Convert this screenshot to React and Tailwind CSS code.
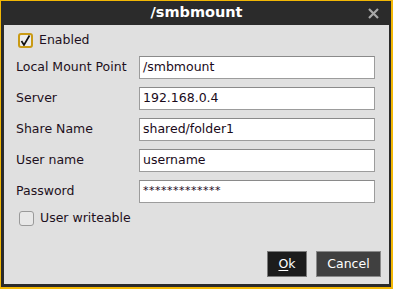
import React from "react";

const fields = [
  { label: "Local Mount Point", value: "/smbmount" },
  { label: "Server", value: "192.168.0.4" },
  { label: "Share Name", value: "shared/folder1" },
  { label: "User name", value: "username" },
  { label: "Password", value: "*************", secret: true },
];

function Check({ checked }) {
  return (
    <div
      className={`w-[15px] h-[15px] rounded-[3px] flex items-center justify-center ${
        checked ? "border-2 border-[#c99a14] bg-[#ececec]" : "border border-[#9a9a9a] bg-[#e8e8e8]"
      }`}
    >
      {checked && (
        <svg width="11" height="11" viewBox="0 0 11 11">
          <path d="M1.5 6 L4 10 L9.5 0.5" fill="none" stroke="#111" strokeWidth="1.7" />
        </svg>
      )}
    </div>
  );
}

export default function App() {
  return (
    <div
      className="w-[393px] h-[289px] bg-[#f2b705] pl-[1px] pt-[1px] pr-[2px] pb-[2px]"
      style={{ fontFamily: "'DejaVu Sans', sans-serif" }}
    >
      <div className="w-full h-full bg-[#2b2b2b] flex flex-col pl-[3px] pr-[2px] pb-[3px]">
        {/* Title bar */}
        <div className="h-[24px] flex items-center justify-center relative shrink-0">
          <span className="text-white font-bold text-[14.5px]">/smbmount</span>
          <svg
            className="absolute right-[10px] top-[7px]"
            width="11"
            height="11"
            viewBox="0 0 11 11"
          >
            <path d="M1 1 L10 10 M10 1 L1 10" stroke="#a8a8a8" strokeWidth="2.2" />
          </svg>
        </div>

        {/* Body */}
        <div className="flex-1 bg-[#e0e0e0] flex flex-col pl-[12px] pr-[14px] pt-[8px]">
          <div className="flex items-center gap-[6px] h-[15px] pl-[2px]">
            <Check checked />
            <span className="text-[12.5px] text-[#1e1020]">Enabled</span>
          </div>

          <div className="flex flex-col gap-[8px] mt-[8px]">
            {fields.map((f) => (
              <div key={f.label} className="flex items-center h-[23px]">
                <span className="w-[123px] text-[12.5px] text-[#1e1020]">{f.label}</span>
                <div className="flex-1 h-[23px] bg-white border border-[#9c9c9c] border-t-[#8a8a8a] flex items-center px-[3px]">
                  <span
                    className={`text-[#1a0a1a] ${
                      f.secret ? "text-[11px] tracking-[0.5px]" : "text-[12.5px]"
                    }`}
                  >
                    {f.value}
                  </span>
                </div>
              </div>
            ))}
          </div>

          <div className="flex items-center gap-[6px] h-[14px] mt-[8px] pl-[3px]">
            <Check />
            <span className="text-[12.5px] text-[#1e1020]">User writeable</span>
          </div>

          <div className="flex-1" />

          <div className="flex justify-end gap-[9px] pb-[7px] -mr-[6px]">
            <button className="w-[40px] h-[26px] bg-[#1c1c1c] border border-[#7a7a7a] text-white text-[12.5px]">
              <span className="underline underline-offset-2">O</span>k
            </button>
            <button className="w-[65px] h-[26px] bg-[#404040] border border-[#8a8a8a] text-white text-[12.5px]">
              Cancel
            </button>
          </div>
        </div>
      </div>
    </div>
  );
}
